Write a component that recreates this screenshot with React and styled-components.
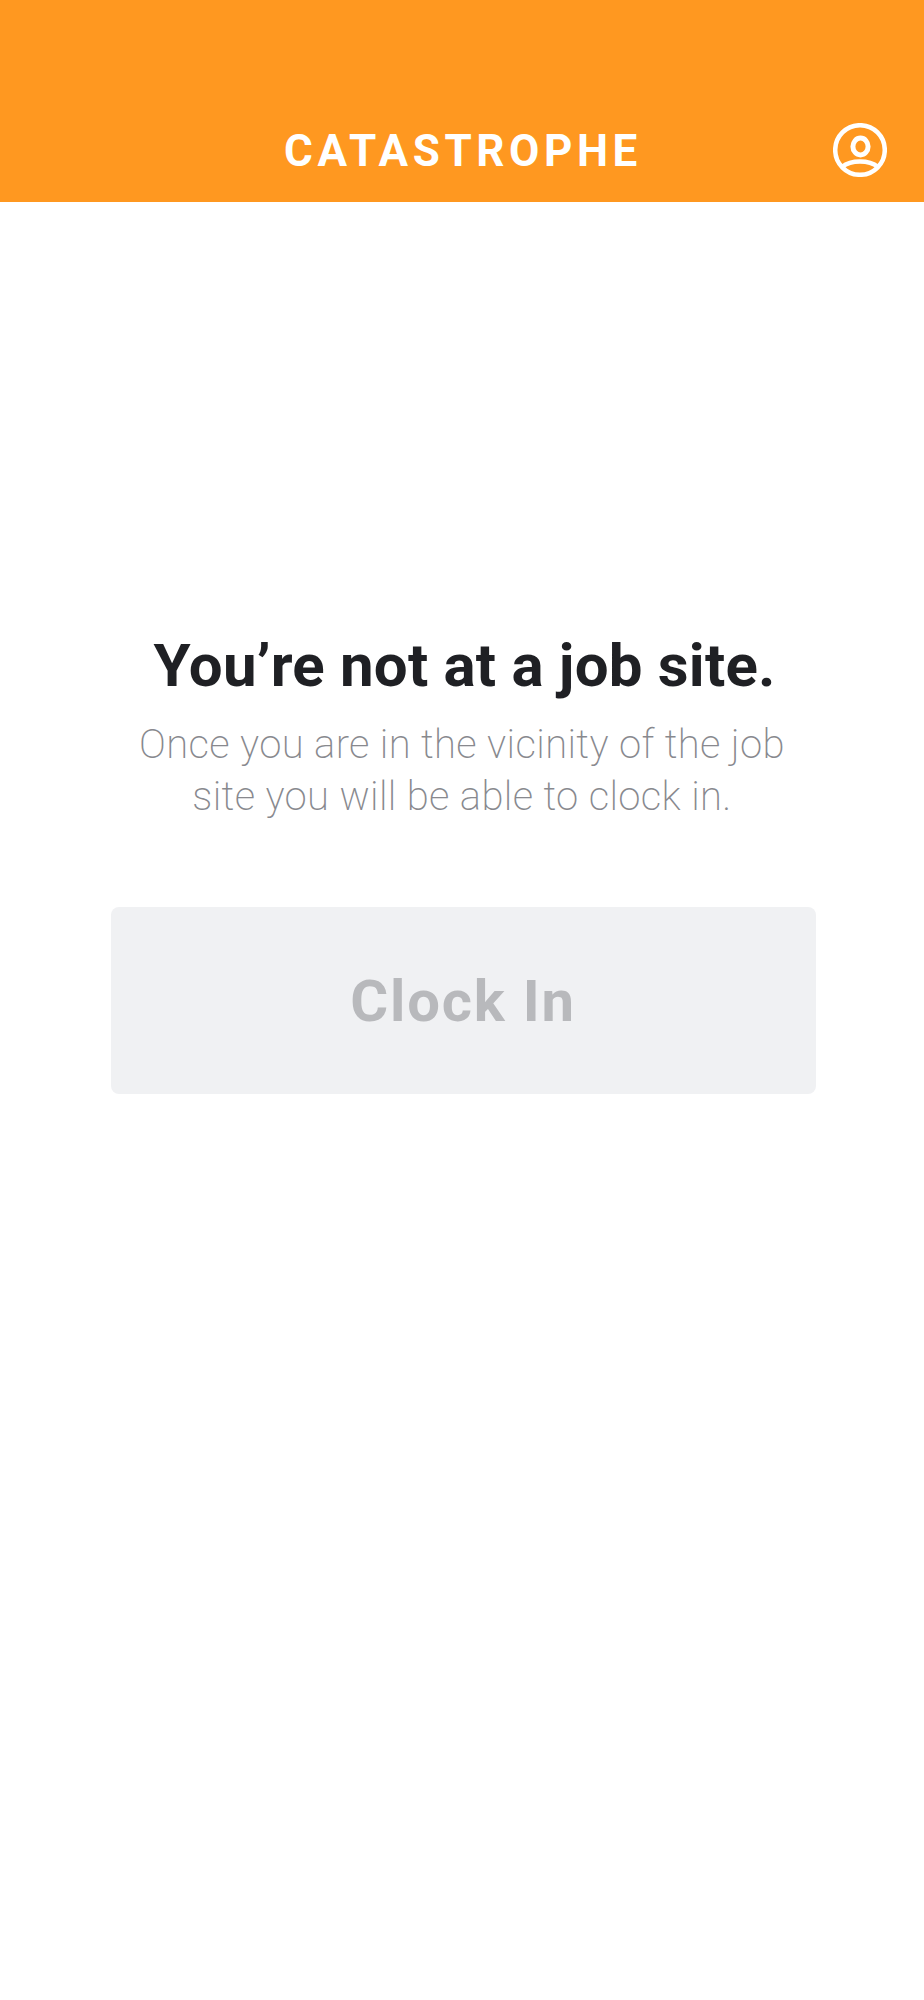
import React from "react";
import styled, { createGlobalStyle } from "styled-components";

const GlobalStyle = createGlobalStyle`
  html, body {
    margin: 0;
    padding: 0;
    background: #ffffff;
    font-family: Roboto, "Liberation Sans", sans-serif;
  }
`;

function ProfileIcon() {
  return (
    <svg width="54" height="54" viewBox="0 0 54 54" fill="none" stroke="#fff" strokeWidth="4.5">
      <circle cx="27" cy="27" r="24.8" />
      <ellipse cx="27.5" cy="23.5" rx="7.6" ry="8.4" strokeWidth="5" />
      <path d="M9 44 C 14 40 20 38.5 27 38.5 C 34 38.5 40 40 45 44" />
    </svg>
  );
}

function App() {
  return (
    <Page>
      <GlobalStyle />
      <Header>
        <Title>CATASTROPHE</Title>
        <ProfileButton>
          <ProfileIcon />
        </ProfileButton>
      </Header>
      <Main>
        <Heading>You’re not at a job site.</Heading>
        <Message>
          Once you are in the vicinity of the job
          <br />
          site you will be able to clock in.
        </Message>
        <ClockInButton disabled>Clock In</ClockInButton>
      </Main>
    </Page>
  );
}
export default App;

const Page = styled.div`
  width: 924px;
  height: 2000px;
  display: flex;
  flex-direction: column;
  background: #ffffff;
`;

const Header = styled.header`
  position: relative;
  height: 202px;
  flex: none;
  display: flex;
  align-items: flex-end;
  justify-content: center;
  padding: 0 0 26px 2px;
  box-sizing: border-box;
  background: #ff9820;
`;

const Title = styled.h1`
  margin: 0;
  font-size: 44px;
  line-height: 50px;
  font-weight: 700;
  letter-spacing: 4.6px;
  color: #ffffff;
`;

const ProfileButton = styled.div`
  position: absolute;
  right: 37px;
  top: 123px;
  width: 54px;
  height: 54px;
  display: flex;
`;

const Main = styled.main`
  display: flex;
  flex-direction: column;
  align-items: center;
  padding-top: 426px;
`;

const Heading = styled.h2`
  margin: 0 0 0 5px;
  font-size: 60px;
  line-height: 76px;
  font-weight: 700;
  letter-spacing: 0.2px;
  color: #1f2024;
  text-align: center;
`;

const Message = styled.p`
  margin: 15px 0 0;
  font-size: 40px;
  line-height: 52px;
  font-weight: 200;
  letter-spacing: 0.36px;
  color: #88898e;
  text-align: center;
`;

const ClockInButton = styled.button`
  margin: 84px 0 0 2px;
  width: 705px;
  height: 187px;
  border: none;
  border-radius: 8px;
  padding: 0;
  background: #f0f1f3;
  color: #b8b9bc;
  font-family: inherit;
  font-size: 58px;
  font-weight: 700;
  letter-spacing: 1.8px;
`;
